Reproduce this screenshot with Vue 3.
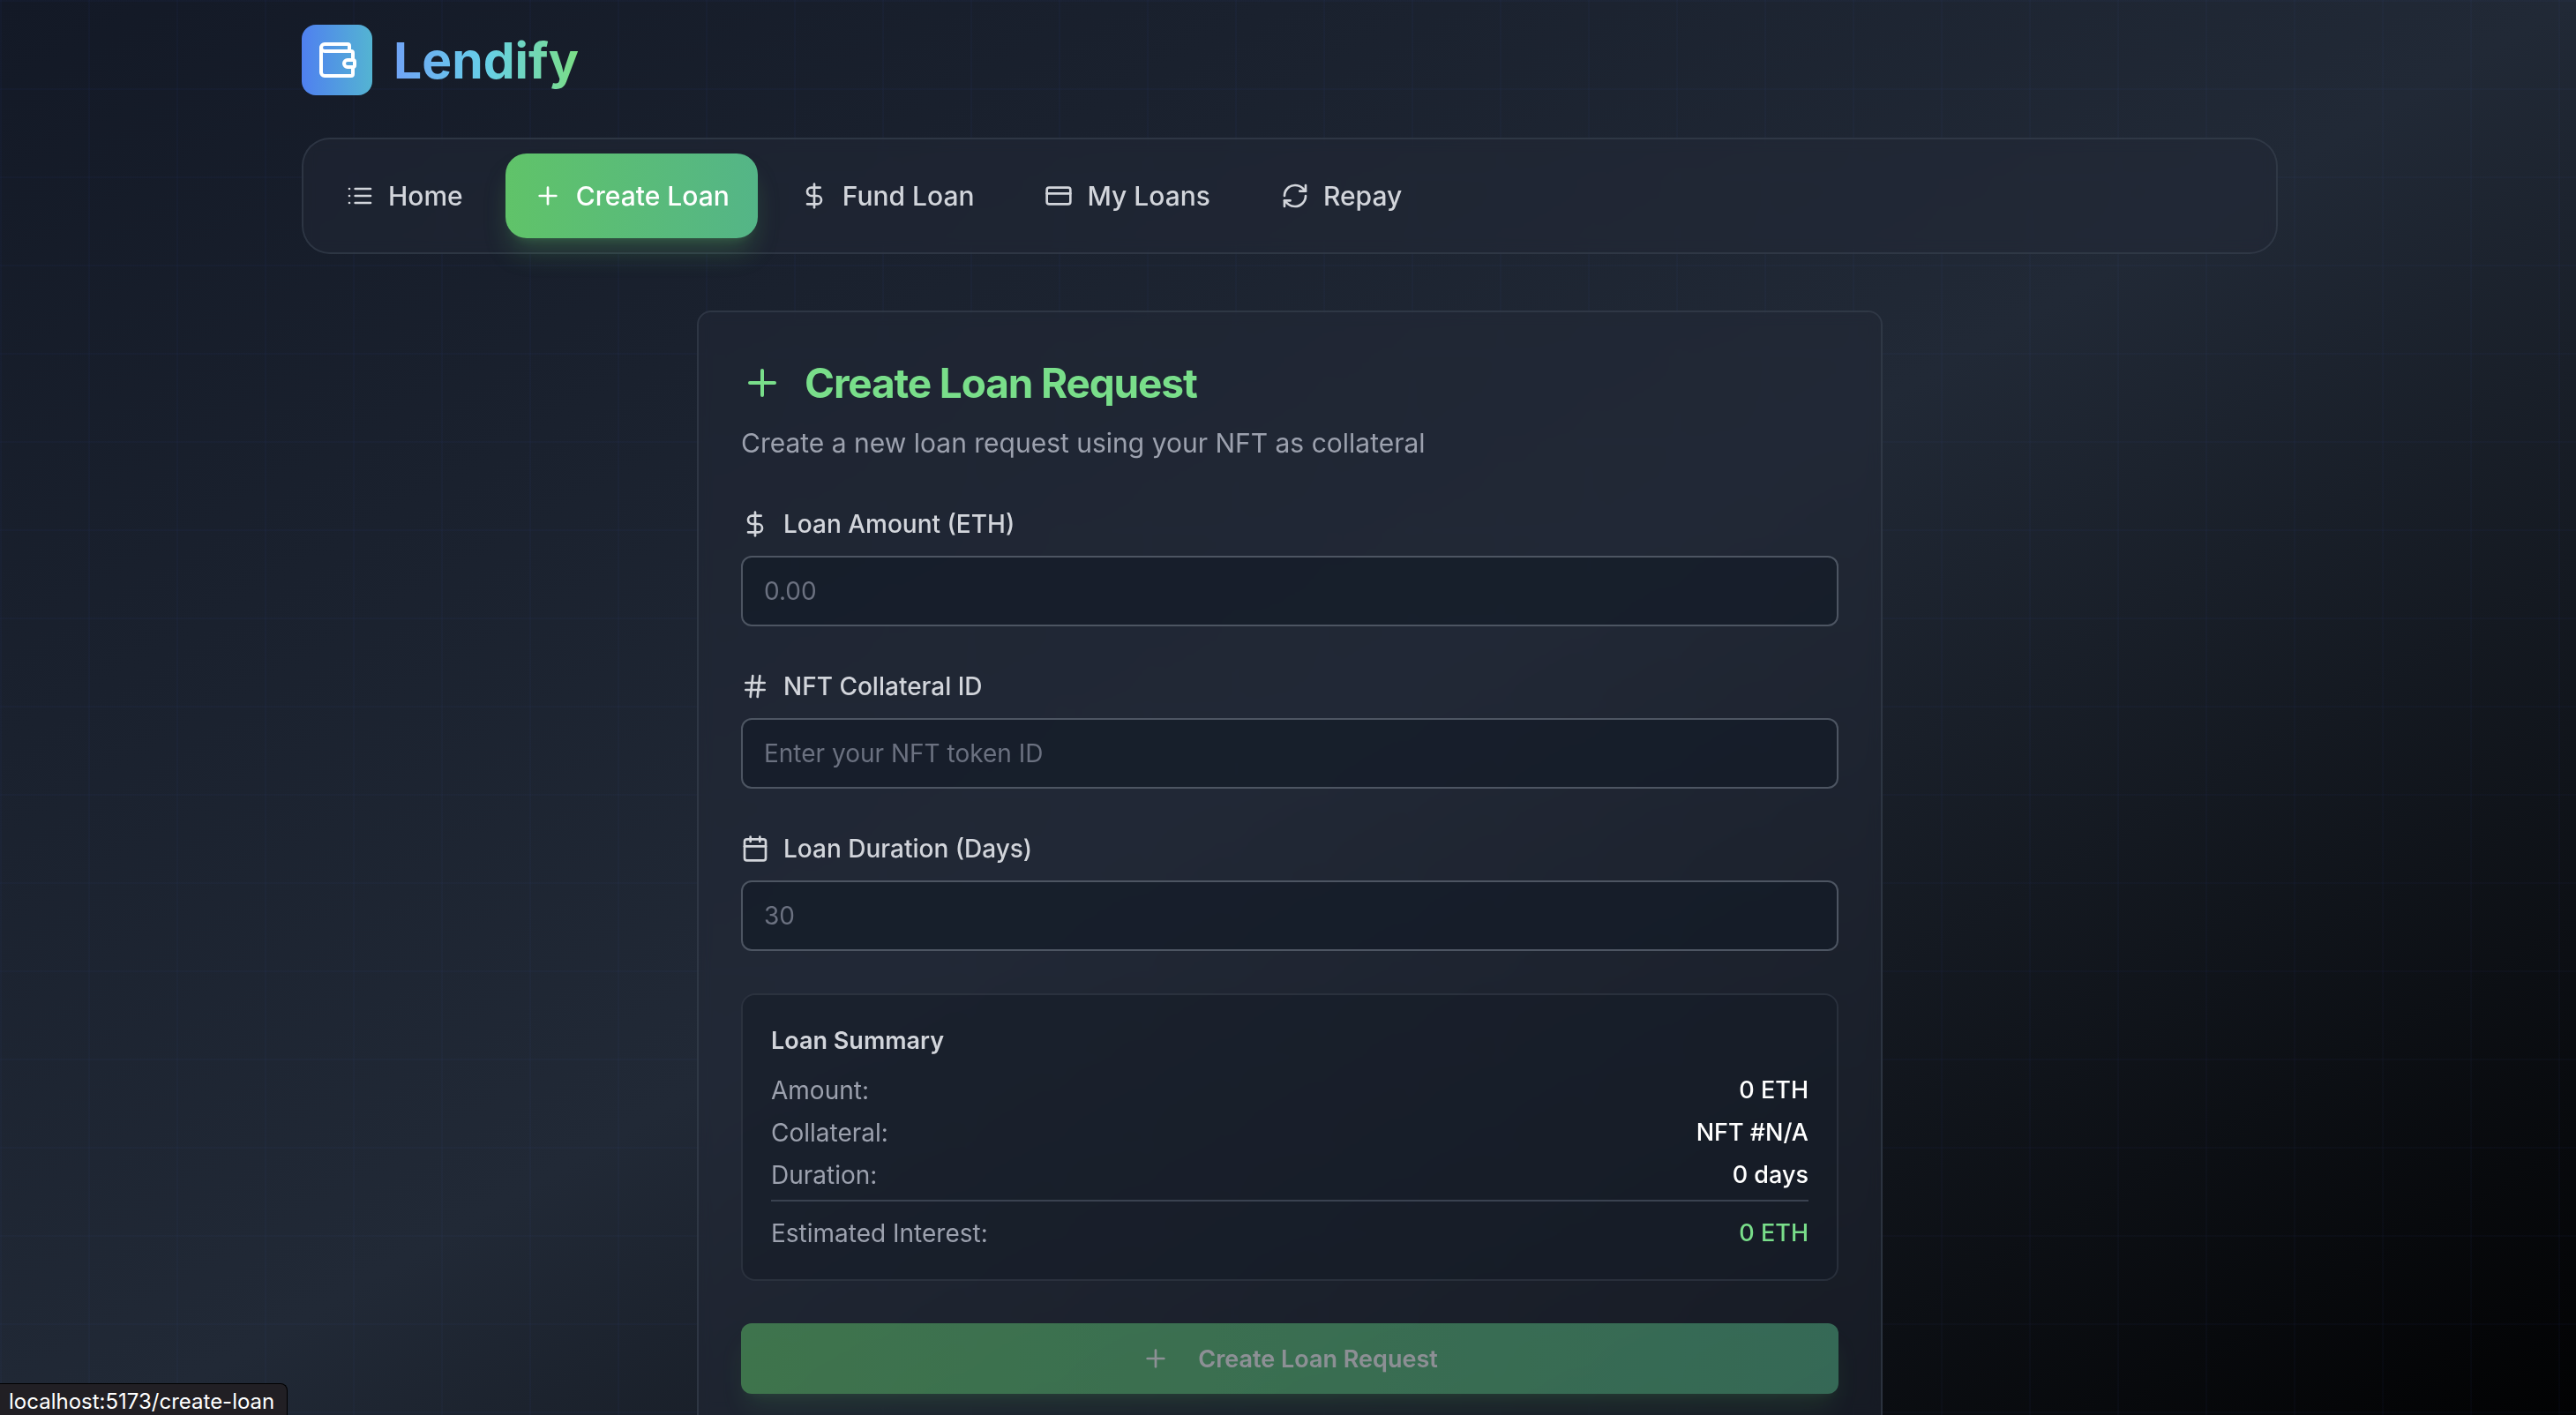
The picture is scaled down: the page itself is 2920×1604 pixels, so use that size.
<script setup>
import { computed, h, reactive } from 'vue'

const shapes = {
  wallet: [
    'M19 7V4a1 1 0 0 0-1-1H5a2 2 0 0 0 0 4h15a1 1 0 0 1 1 1v4h-3a2 2 0 0 0 0 4h3a1 1 0 0 0 1-1v-2a1 1 0 0 0-1-1',
    'M3 5v14a2 2 0 0 0 2 2h15a1 1 0 0 0 1-1v-4',
  ],
  list: ['M8 6h13', 'M8 12h13', 'M8 18h13', 'M3 6h.01', 'M3 12h.01', 'M3 18h.01'],
  plus: ['M5 12h14', 'M12 5v14'],
  dollar: ['M12 2v20', 'M17 5H9.5a3.5 3.5 0 0 0 0 7h5a3.5 3.5 0 0 1 0 7H6'],
  card: ['M4 5h16a2 2 0 0 1 2 2v10a2 2 0 0 1-2 2H4a2 2 0 0 1-2-2V7a2 2 0 0 1 2-2z', 'M2 10h20'],
  refresh: [
    'M3 12a9 9 0 0 1 9-9 9.75 9.75 0 0 1 6.74 2.74L21 8',
    'M21 3v5h-5',
    'M21 12a9 9 0 0 1-9 9 9.75 9.75 0 0 1-6.74-2.74L3 16',
    'M8 16H3v5',
  ],
  hash: ['M4 9h16', 'M4 15h16', 'M10 3 8 21', 'M16 3l-2 18'],
  calendar: ['M8 2v4', 'M16 2v4', 'M5 4h14a2 2 0 0 1 2 2v14a2 2 0 0 1-2 2H5a2 2 0 0 1-2-2V6a2 2 0 0 1 2-2z', 'M3 10h18'],
}

const Icon = (props) =>
  h(
    'svg',
    {
      viewBox: '0 0 24 24',
      fill: 'none',
      stroke: 'currentColor',
      'stroke-width': 2,
      'stroke-linecap': 'round',
      'stroke-linejoin': 'round',
      'aria-hidden': 'true',
    },
    shapes[props.name].map((d) => h('path', { d })),
  )
Icon.props = ['name']

const links = [
  { label: 'Home', icon: 'list', to: '/' },
  { label: 'Create Loan', icon: 'plus', to: '/create-loan', active: true },
  { label: 'Fund Loan', icon: 'dollar', to: '/fund-loan' },
  { label: 'My Loans', icon: 'card', to: '/my-loans' },
  { label: 'Repay', icon: 'refresh', to: '/repay' },
]

const fields = [
  { id: 'amount', label: 'Loan Amount (ETH)', icon: 'dollar', placeholder: '0.00' },
  { id: 'collateral', label: 'NFT Collateral ID', icon: 'hash', placeholder: 'Enter your NFT token ID' },
  { id: 'duration', label: 'Loan Duration (Days)', icon: 'calendar', placeholder: '30' },
]

const form = reactive({ amount: '', collateral: '', duration: '' })

const incomplete = computed(() => !form.amount || !form.collateral || !form.duration)
const interest = computed(() => (Number(form.amount) ? (Number(form.amount) * 0.05).toFixed(4) : '0'))
</script>

<template>
  <div class="viewport">
    <div class="page">
      <div class="container">
        <header class="brand">
          <span class="brand-mark"><Icon name="wallet" class="icon-lg" /></span>
          <span class="brand-name">Lendify</span>
        </header>

        <nav class="nav" aria-label="Main">
          <a
            v-for="link in links"
            :key="link.label"
            :href="link.to"
            class="nav-link"
            :class="{ active: link.active }"
          >
            <Icon :name="link.icon" class="icon" />
            <span>{{ link.label }}</span>
          </a>
        </nav>

        <main class="card">
          <div class="card-head">
            <h1 class="title"><Icon name="plus" class="icon-lg" />Create Loan Request</h1>
            <p class="subtitle">Create a new loan request using your NFT as collateral</p>
          </div>

          <form class="form" @submit.prevent>
            <div v-for="field in fields" :key="field.id" class="field">
              <label :for="field.id" class="label"><Icon :name="field.icon" class="icon" />{{ field.label }}</label>
              <input :id="field.id" v-model="form[field.id]" class="input" type="text" :placeholder="field.placeholder" />
            </div>

            <section class="summary">
              <h2 class="summary-title">Loan Summary</h2>
              <dl class="rows">
                <div class="row"><dt>Amount:</dt><dd>{{ form.amount || '0' }} ETH</dd></div>
                <div class="row"><dt>Collateral:</dt><dd>NFT #{{ form.collateral || 'N/A' }}</dd></div>
                <div class="row"><dt>Duration:</dt><dd>{{ form.duration || '0' }} days</dd></div>
                <div class="row total"><dt>Estimated Interest:</dt><dd>{{ interest }} ETH</dd></div>
              </dl>
            </section>

            <button class="submit" type="submit" :disabled="incomplete">
              <Icon name="plus" class="icon" />Create Loan Request
            </button>
          </form>
        </main>
      </div>
    </div>
    <div class="status">localhost:5173/create-loan</div>
  </div>
</template>

<style>
body {
  margin: 0;
  background: #000;
}
</style>

<style scoped>
.viewport {
  height: 100vh;
  overflow-y: auto;
  scrollbar-width: none;
  font-family: Inter, 'Liberation Sans', sans-serif;
  color: #fff;
}

.page {
  box-sizing: border-box;
  min-height: 100%;
  padding: 28px 0 64px 4px;
  background:
    linear-gradient(rgba(72, 100, 246, 0.03) 2px, transparent 2px) 0 0 / 100px 100px,
    linear-gradient(90deg, rgba(72, 100, 246, 0.03) 2px, transparent 2px) 0 0 / 100px 100px,
    linear-gradient(to bottom right, #131926, #212936, #000);
}

.container {
  max-width: 2240px;
  margin: 0 auto;
}

.icon {
  width: 32px;
  height: 32px;
  flex: none;
}

.icon-lg {
  width: 48px;
  height: 48px;
  flex: none;
}

.brand {
  display: flex;
  align-items: center;
  gap: 24px;
}

.brand-mark {
  display: flex;
  padding: 16px;
  border-radius: 16px;
  background: linear-gradient(90deg, #4f80f0, #54b4d2);
}

.brand-name {
  padding-top: 2px;
  font-size: 57px;
  line-height: 74px;
  font-weight: 700;
  background: linear-gradient(90deg, #70a3f6, #66cfe8 50%, #7bde85);
  background-clip: text;
  color: transparent;
}

.nav {
  display: flex;
  gap: 16px;
  margin: 48px 0 64px;
  padding: 16px;
  border: 2px solid rgba(59, 67, 82, 0.6);
  border-radius: 32px;
  background: rgba(33, 40, 53, 0.5);
  backdrop-filter: blur(8px);
}

.nav-link {
  display: flex;
  align-items: center;
  gap: 16px;
  padding: 24px 32px;
  border-radius: 24px;
  color: #d2d5db;
  font-size: 30px;
  line-height: 48px;
  font-weight: 500;
  text-decoration: none;
}

.nav-link.active {
  color: #fff;
  background: linear-gradient(90deg, #60c369, #54b587);
  box-shadow: 0 20px 30px -6px rgba(96, 195, 106, 0.25), 0 8px 12px -8px rgba(96, 195, 106, 0.25);
}

.card {
  box-sizing: border-box;
  max-width: 1344px;
  margin: 0 auto;
  padding: 48px;
  border: 2px solid rgba(59, 67, 82, 0.6);
  border-radius: 16px;
  background: rgba(33, 40, 53, 0.5);
  backdrop-filter: blur(8px);
}

.card-head {
  display: flex;
  flex-direction: column;
  gap: 12px;
  margin-bottom: 48px;
}

.title {
  display: flex;
  align-items: center;
  gap: 24px;
  margin: 0;
  color: #79de8a;
  font-size: 46px;
  line-height: 64px;
  font-weight: 700;
  letter-spacing: -0.025em;
}

.subtitle {
  margin: 0;
  color: #9ca1ae;
  font-size: 30px;
  line-height: 48px;
}

.form {
  display: flex;
  flex-direction: column;
  gap: 48px;
  font-size: 28px;
  line-height: 40px;
}

.field {
  display: flex;
  flex-direction: column;
  gap: 16px;
}

.label {
  display: flex;
  align-items: center;
  gap: 16px;
  color: #d2d5db;
  font-weight: 500;
}

.input {
  box-sizing: border-box;
  width: 100%;
  height: 80px;
  padding: 0 24px;
  border: 2px solid #4d5562;
  border-radius: 12px;
  background: rgba(19, 25, 38, 0.6);
  color: #fff;
  font: inherit;
}

.input::placeholder {
  color: #6b7180;
}

.summary {
  padding: 32px;
  border: 2px solid rgba(59, 67, 82, 0.5);
  border-radius: 16px;
  background: rgba(19, 25, 38, 0.5);
}

.summary-title {
  margin: 0 0 16px;
  color: #d2d5db;
  font-size: 27px;
  line-height: 40px;
  font-weight: 600;
}

.rows {
  display: flex;
  flex-direction: column;
  gap: 8px;
  margin: 0;
}

.row {
  display: flex;
  justify-content: space-between;
  color: #9ca1ae;
}

.row dd {
  margin: 0;
  color: #fff;
  font-size: 27px;
  font-weight: 500;
}

.total {
  padding-top: 16px;
  border-top: 2px solid #3a4250;
}

.row.total dd {
  color: #79de8a;
}

.submit {
  display: flex;
  align-items: center;
  justify-content: center;
  gap: 32px;
  height: 80px;
  padding: 0 32px;
  border: 0;
  border-radius: 12px;
  background: linear-gradient(90deg, #60c369, #54b587);
  box-shadow: 0 20px 30px -6px rgba(96, 195, 106, 0.25), 0 8px 12px -8px rgba(96, 195, 106, 0.25);
  color: #fff;
  font-family: inherit;
  font-size: 27px;
  font-weight: 600;
}

.submit:disabled {
  opacity: 0.5;
}

.status {
  position: fixed;
  left: 0;
  bottom: 0;
  padding: 5px 14px 0 10px;
  border-top: 1px solid #000;
  border-right: 1px solid #000;
  border-radius: 0 8px 0 0;
  background: #211f24;
  color: #fff;
  font-size: 24px;
  line-height: 30px;
}
</style>
